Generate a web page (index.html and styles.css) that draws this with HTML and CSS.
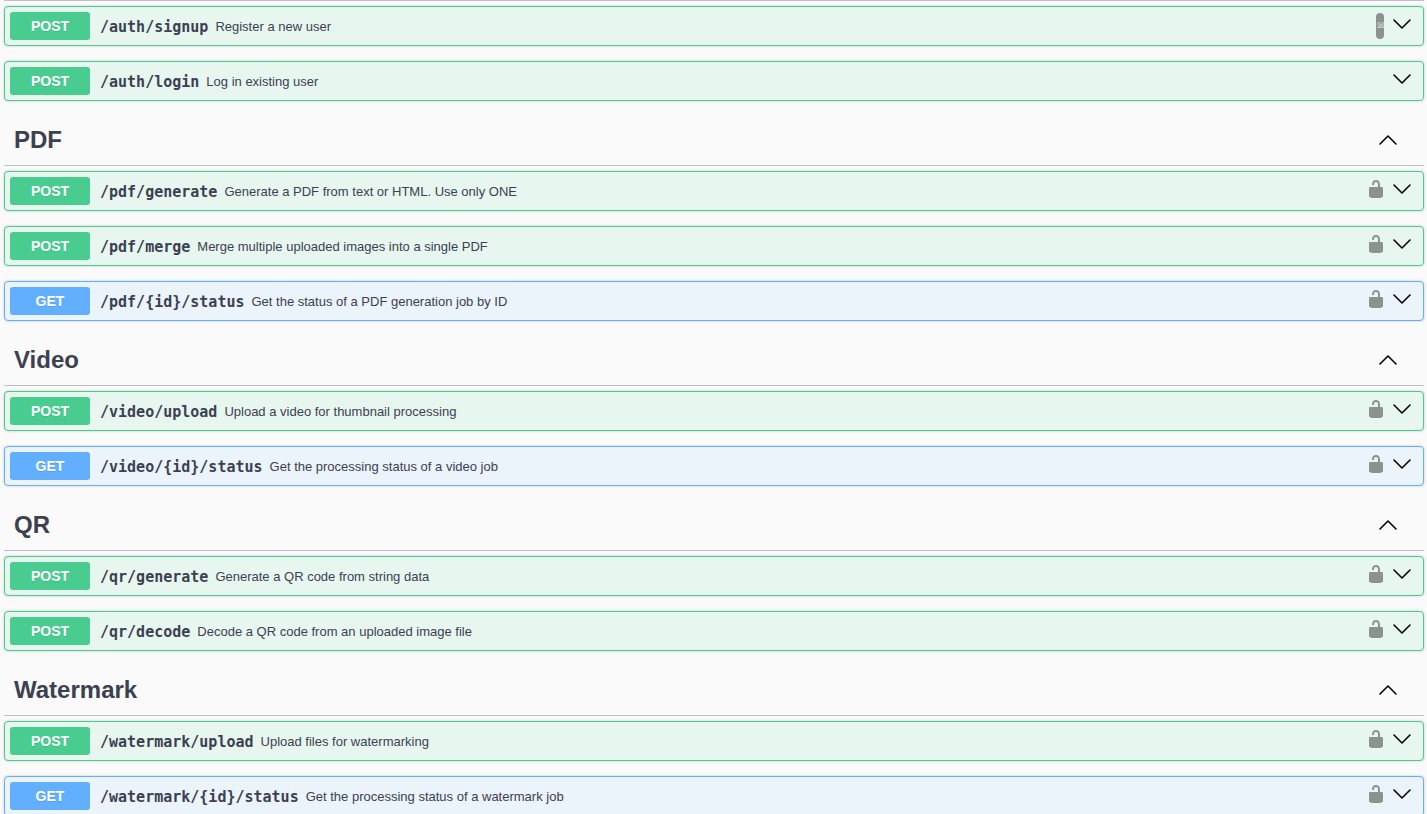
FILE: index.html
```
<!DOCTYPE html>
<html lang="en">
<head>
  <meta charset="UTF-8" />
  <meta name="viewport" content="width=device-width, initial-scale=1.0"/>
  <title>API Docs</title>
  <link rel="stylesheet" href="styles.css">
</head>
<body>
  <!-- Shared icons -->
  <svg class="sprite" aria-hidden="true">
    <symbol id="arrow-down" viewBox="0 0 20 20">
      <path d="M2 6l8 8 8-8" fill="none" stroke="#000" stroke-width="1.6" stroke-linecap="round" stroke-linejoin="round"/>
    </symbol>
    <symbol id="arrow-up" viewBox="0 0 20 20">
      <path d="M2 14l8-8 8 8" fill="none" stroke="#000" stroke-width="1.6" stroke-linecap="round" stroke-linejoin="round"/>
    </symbol>
    <symbol id="unlocked" viewBox="0 0 20 20">
      <path d="M15.8 8H14V5.6C14 2.703 12.665 1 10 1 7.334 1 6 2.703 6 5.6V6h2v-.801C8 3.754 8.797 3 10 3c1.203 0 2 .754 2 2.199V8H4c-.553 0-1 .646-1 1.199V17c0 .549.428 1.139.951 1.307l1.197.387C5.672 18.861 6.55 19 7.1 19h5.8c.549 0 1.428-.139 1.951-.307l1.196-.387c.524-.167.953-.757.953-1.306V9.199C17 8.646 16.352 8 15.8 8z" fill="#8b9390"/>
    </symbol>
  </svg>

  <main class="container">
    <section class="tag-section">
      <div class="opblock post">
        <button class="summary"><span class="method">POST</span><span class="path">/auth/signup</span><span class="description">Register a new user</span></button>
        <span class="badge">☒</span>
        <button class="toggle" aria-label="Expand signup"><svg><use href="#arrow-down"/></svg></button>
      </div>
      <div class="opblock post">
        <button class="summary"><span class="method">POST</span><span class="path">/auth/login</span><span class="description">Log in existing user</span></button>
        <button class="toggle" aria-label="Expand login"><svg><use href="#arrow-down"/></svg></button>
      </div>
    </section>

    <section class="tag-section">
      <div class="tag-header">
        <h2>PDF</h2>
        <button class="toggle" aria-label="Collapse PDF"><svg><use href="#arrow-up"/></svg></button>
      </div>
      <div class="opblock post">
        <button class="summary"><span class="method">POST</span><span class="path">/pdf/generate</span><span class="description">Generate a PDF from text or HTML. Use only ONE</span></button>
        <button class="lock" aria-label="Authorize"><svg><use href="#unlocked"/></svg></button>
        <button class="toggle" aria-label="Expand PDF generate"><svg><use href="#arrow-down"/></svg></button>
      </div>
      <div class="opblock post">
        <button class="summary"><span class="method">POST</span><span class="path">/pdf/merge</span><span class="description">Merge multiple uploaded images into a single PDF</span></button>
        <button class="lock" aria-label="Authorize"><svg><use href="#unlocked"/></svg></button>
        <button class="toggle" aria-label="Expand PDF merge"><svg><use href="#arrow-down"/></svg></button>
      </div>
      <div class="opblock get">
        <button class="summary"><span class="method">GET</span><span class="path">/pdf/{id}/status</span><span class="description">Get the status of a PDF generation job by ID</span></button>
        <button class="lock" aria-label="Authorize"><svg><use href="#unlocked"/></svg></button>
        <button class="toggle" aria-label="Expand PDF status"><svg><use href="#arrow-down"/></svg></button>
      </div>
    </section>

    <section class="tag-section">
      <div class="tag-header">
        <h2>Video</h2>
        <button class="toggle" aria-label="Collapse Video"><svg><use href="#arrow-up"/></svg></button>
      </div>
      <div class="opblock post">
        <button class="summary"><span class="method">POST</span><span class="path">/video/upload</span><span class="description">Upload a video for thumbnail processing</span></button>
        <button class="lock" aria-label="Authorize"><svg><use href="#unlocked"/></svg></button>
        <button class="toggle" aria-label="Expand video upload"><svg><use href="#arrow-down"/></svg></button>
      </div>
      <div class="opblock get">
        <button class="summary"><span class="method">GET</span><span class="path">/video/{id}/status</span><span class="description">Get the processing status of a video job</span></button>
        <button class="lock" aria-label="Authorize"><svg><use href="#unlocked"/></svg></button>
        <button class="toggle" aria-label="Expand video status"><svg><use href="#arrow-down"/></svg></button>
      </div>
    </section>

    <section class="tag-section">
      <div class="tag-header">
        <h2>QR</h2>
        <button class="toggle" aria-label="Collapse QR"><svg><use href="#arrow-up"/></svg></button>
      </div>
      <div class="opblock post">
        <button class="summary"><span class="method">POST</span><span class="path">/qr/generate</span><span class="description">Generate a QR code from string data</span></button>
        <button class="lock" aria-label="Authorize"><svg><use href="#unlocked"/></svg></button>
        <button class="toggle" aria-label="Expand QR generate"><svg><use href="#arrow-down"/></svg></button>
      </div>
      <div class="opblock post">
        <button class="summary"><span class="method">POST</span><span class="path">/qr/decode</span><span class="description">Decode a QR code from an uploaded image file</span></button>
        <button class="lock" aria-label="Authorize"><svg><use href="#unlocked"/></svg></button>
        <button class="toggle" aria-label="Expand QR decode"><svg><use href="#arrow-down"/></svg></button>
      </div>
    </section>

    <section class="tag-section">
      <div class="tag-header">
        <h2>Watermark</h2>
        <button class="toggle" aria-label="Collapse Watermark"><svg><use href="#arrow-up"/></svg></button>
      </div>
      <div class="opblock post">
        <button class="summary"><span class="method">POST</span><span class="path">/watermark/upload</span><span class="description">Upload files for watermarking</span></button>
        <button class="lock" aria-label="Authorize"><svg><use href="#unlocked"/></svg></button>
        <button class="toggle" aria-label="Expand watermark upload"><svg><use href="#arrow-down"/></svg></button>
      </div>
      <div class="opblock get">
        <button class="summary"><span class="method">GET</span><span class="path">/watermark/{id}/status</span><span class="description">Get the processing status of a watermark job</span></button>
        <button class="lock" aria-label="Authorize"><svg><use href="#unlocked"/></svg></button>
        <button class="toggle" aria-label="Expand watermark status"><svg><use href="#arrow-down"/></svg></button>
      </div>
    </section>
  </main>
</body>
</html>
```
FILE: styles.css
```
* {
  box-sizing: border-box;
  margin: 0;
  padding: 0;
}

html {
  overflow: hidden;
}

body {
  background: #fafafa;
  color: #3b4151;
  font-family: "Liberation Sans", Arial, sans-serif;
}

.sprite {
  display: none;
}

.container {
  padding: 0 3px 0 4px;
}

.tag-section:first-child {
  border-top: 1px solid #c0c0c4;
  padding-top: 5px;
}

.tag-header {
  display: flex;
  align-items: center;
  justify-content: space-between;
  height: 50px;
  padding: 0 26px 1px 10px;
  margin-bottom: 5px;
  border-bottom: 1px solid #c0c0c4;
}

.tag-header h2 {
  font-size: 24px;
  line-height: 28px;
}

button {
  border: none;
  background: none;
  color: inherit;
  font-family: inherit;
  cursor: pointer;
}

.opblock {
  display: flex;
  align-items: center;
  height: 40px;
  padding: 0 11px 0 5px;
  margin-bottom: 15px;
  border: 1px solid;
  border-radius: 4px;
  box-shadow: 0 0 3px rgba(0, 0, 0, 0.19);
}

.post {
  background: #e8f6f0;
  border-color: #49cc90;
}

.get {
  background: #ebf3fb;
  border-color: #61affe;
}

.summary {
  display: flex;
  flex: 1;
  align-items: center;
  text-align: left;
}

.method {
  width: 80px;
  border-radius: 3px;
  color: #fff;
  font-size: 14px;
  font-weight: 700;
  line-height: 28px;
  text-align: center;
  text-shadow: 0 1px 0 rgba(0, 0, 0, 0.1);
}

.post .method {
  background: #49cc90;
}

.get .method {
  background: #61affe;
}

.path {
  padding: 2px 7px 0 10px;
  font-family: "DejaVu Sans Mono", monospace;
  font-size: 15px;
  font-weight: 700;
}

.description {
  font-size: 13px;
}

.lock,
.toggle {
  display: flex;
  padding-bottom: 4px;
}

.lock {
  margin-right: 6px;
}

.tag-header .toggle {
  padding-bottom: 0;
}

.lock svg,
.toggle svg {
  width: 20px;
  height: 20px;
}

.badge {
  width: 8px;
  margin-right: 8px;
  border-radius: 4px;
  background: #8b9390;
  color: #e8f6f0;
  font-size: 8px;
  line-height: 26px;
  text-align: center;
}
```
